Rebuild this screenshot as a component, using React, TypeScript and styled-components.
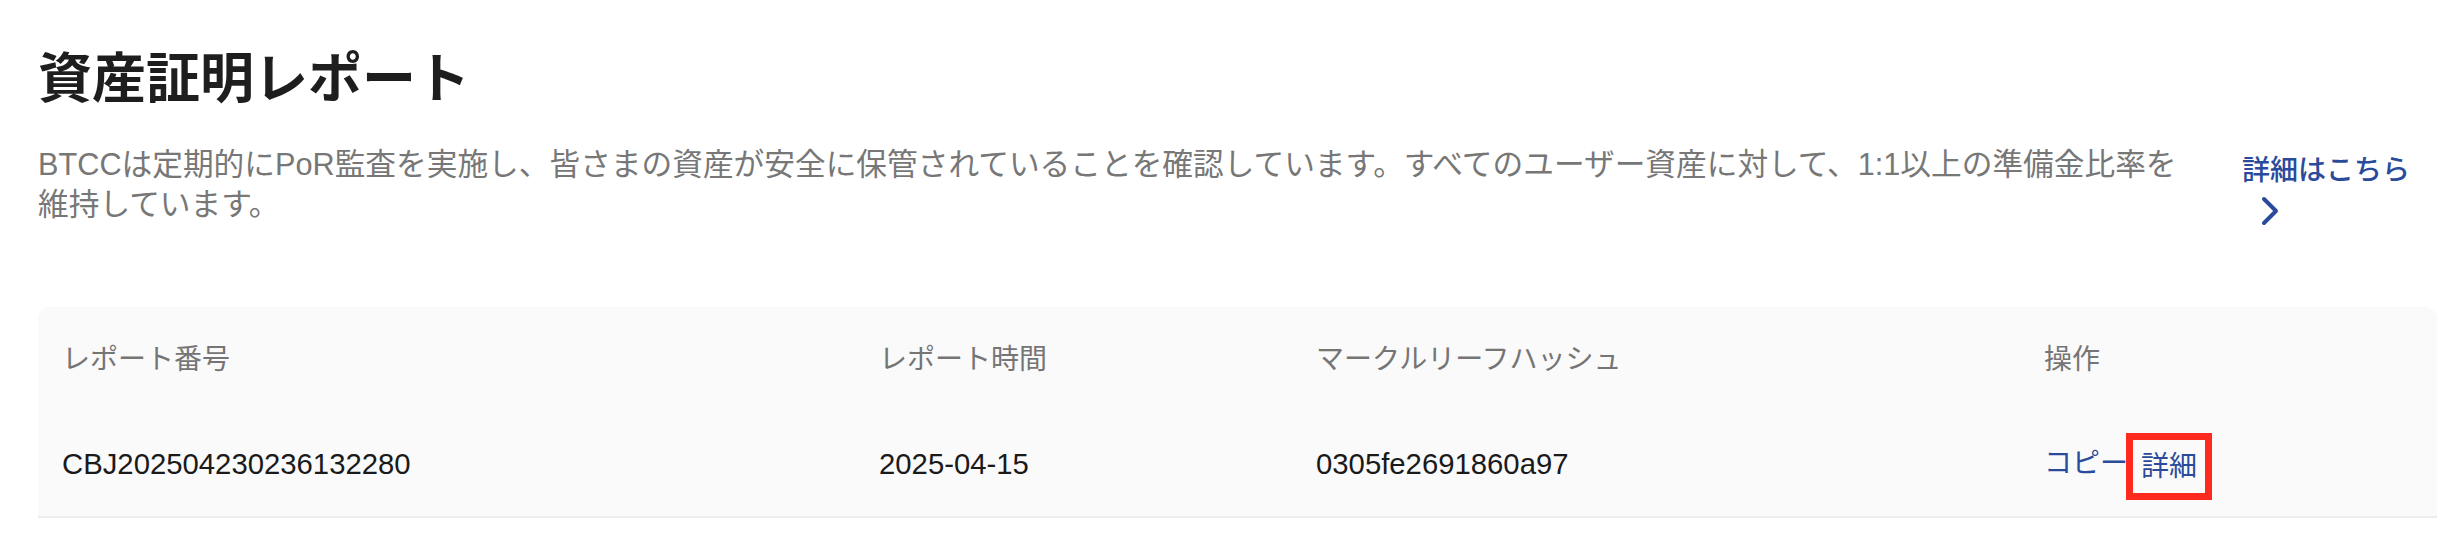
import React from "react";
import styled, { createGlobalStyle } from "styled-components";

const GlobalStyle = createGlobalStyle`
  html, body {
    margin: 0;
    padding: 0;
    background: #ffffff;
  }
  body {
    font-family: "Liberation Sans", "Noto Sans CJK JP", sans-serif;
    -webkit-font-smoothing: antialiased;
  }
`;

const Page = styled.div`
  padding: 37px 25px 0 38px;
`;

const Title = styled.h1`
  margin: 0;
  font-family: "Noto Sans CJK JP", sans-serif;
  font-size: 54px;
  line-height: 76px;
  font-weight: 700;
  color: #1e1e1e;
`;

const IntroRow = styled.div`
  display: flex;
  align-items: flex-start;
  justify-content: space-between;
  margin-top: 32px;
`;

const Description = styled.p`
  flex: 0 1 2155px;
  margin: 0;
  font-size: 30.7px;
  line-height: 40px;
  color: #777777;
`;

const MoreLink = styled.a`
  flex: 0 0 195px;
  margin-top: 6px;
  font-size: 28px;
  line-height: 40px;
  font-weight: 500;
  color: #2a4b9b;
  text-decoration: none;
  cursor: pointer;
`;

const Chevron = styled.svg`
  display: inline-block;
  vertical-align: top;
  width: 40px;
  height: 40px;
`;

const Card = styled.div`
  margin-top: 76px;
  background: #fafafa;
  border-radius: 12px 12px 0 0;
  border-bottom: 2px solid #ededed;
`;

const Row = styled.div<{ $head?: boolean }>`
  display: grid;
  grid-template-columns: 817px 437px 728px 1fr;
  align-items: center;
  height: ${(p) => (p.$head ? "105px" : "104px")};
`;

const Cell = styled.div<{ $head?: boolean }>`
  padding: 0 24px;
  font-size: ${(p) => (p.$head ? "28px" : "29.3px")};
  line-height: 40px;
  color: ${(p) => (p.$head ? "#757575" : "#1a1a1a")};
  white-space: nowrap;
`;

const Actions = styled.div`
  display: flex;
  align-items: center;
  padding: 0 24px;
  font-size: 28px;
  line-height: 40px;
`;

const ActionLink = styled.a<{ $marked?: boolean }>`
  color: #2a4b9b;
  text-decoration: none;
  cursor: pointer;
  ${(p) =>
    p.$marked
      ? `
    margin-left: -2px;
    margin-top: 4px;
    border: 7px solid #ff2a1f;
    padding: 0 8px;
    line-height: 53px;
  `
      : ""}
`;

export default function App() {
  return (
    <>
      <GlobalStyle />
      <Page>
        <Title>資産証明レポート</Title>
        <IntroRow>
          <Description>
            BTCCは定期的にPoR監査を実施し、皆さまの資産が安全に保管されていることを確認しています。すべてのユーザー資産に対して、1:1以上の準備金比率を維持しています。
          </Description>
          <MoreLink>
            詳細はこちら
            <Chevron viewBox="0 0 40 40" fill="none">
              <path
                d="M22 8 L34 20 L22 32"
                stroke="#2a4b9b"
                strokeWidth="4"
                strokeLinecap="round"
                strokeLinejoin="round"
              />
            </Chevron>
          </MoreLink>
        </IntroRow>
        <Card>
          <Row $head>
            <Cell $head>レポート番号</Cell>
            <Cell $head>レポート時間</Cell>
            <Cell $head>マークルリーフハッシュ</Cell>
            <Cell $head>操作</Cell>
          </Row>
          <Row>
            <Cell>CBJ202504230236132280</Cell>
            <Cell>2025-04-15</Cell>
            <Cell>0305fe2691860a97</Cell>
            <Actions>
              <ActionLink>コピー</ActionLink>
              <ActionLink $marked>詳細</ActionLink>
            </Actions>
          </Row>
        </Card>
      </Page>
    </>
  );
}
